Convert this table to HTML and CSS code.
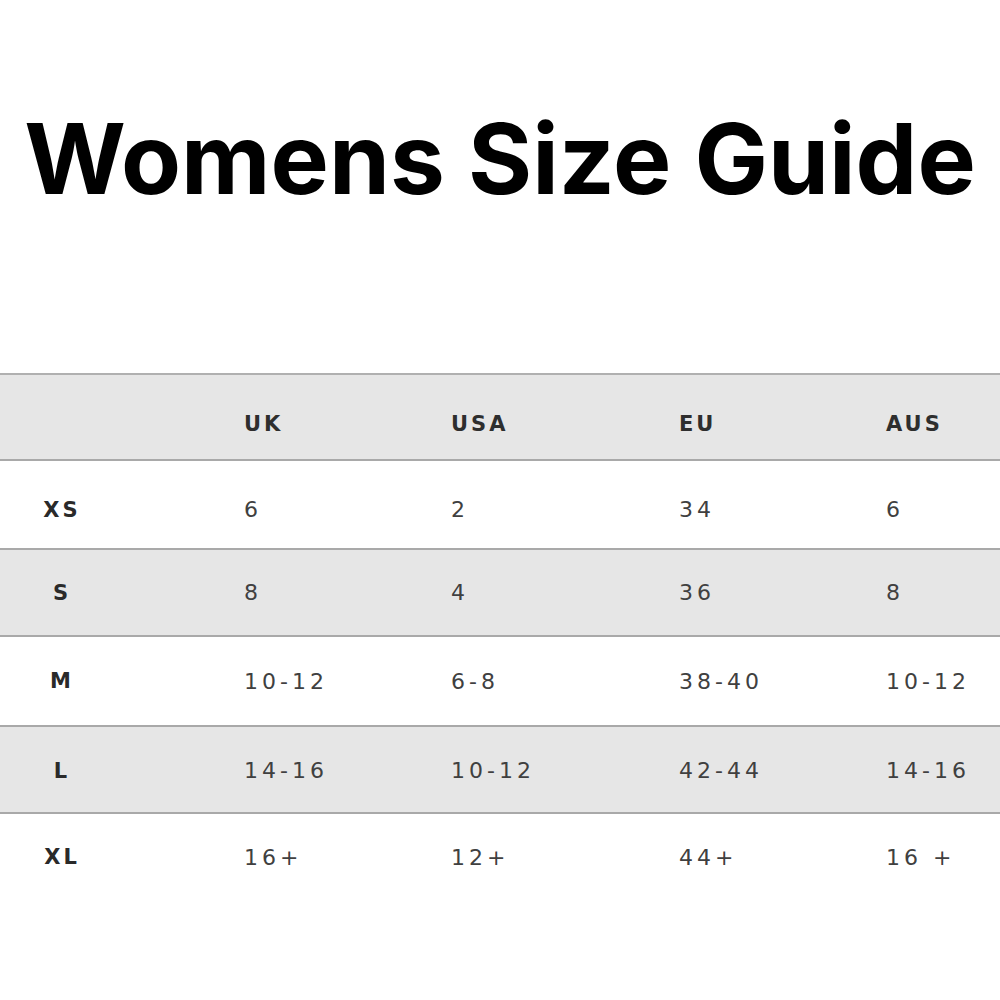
FILE: index.html
```html
<!DOCTYPE html>
<html lang="en">
<head>
<meta charset="utf-8">
<title>Womens Size Guide</title>
<link rel="stylesheet" href="styles.css">
</head>
<body>
<main class="page">
  <h1 class="title">Womens Size Guide</h1>
  <div class="chart">
    <div class="row head shaded">
      <div class="cell label"></div>
      <div class="cell">UK</div>
      <div class="cell">USA</div>
      <div class="cell">EU</div>
      <div class="cell">AUS</div>
    </div>
    <div class="row r-xs">
      <div class="cell label">XS</div>
      <div class="cell">6</div>
      <div class="cell">2</div>
      <div class="cell">34</div>
      <div class="cell">6</div>
    </div>
    <div class="row shaded r-s">
      <div class="cell label">S</div>
      <div class="cell">8</div>
      <div class="cell">4</div>
      <div class="cell">36</div>
      <div class="cell">8</div>
    </div>
    <div class="row r-m">
      <div class="cell label">M</div>
      <div class="cell">10-12</div>
      <div class="cell">6-8</div>
      <div class="cell">38-40</div>
      <div class="cell">10-12</div>
    </div>
    <div class="row shaded r-l">
      <div class="cell label">L</div>
      <div class="cell">14-16</div>
      <div class="cell">10-12</div>
      <div class="cell">42-44</div>
      <div class="cell">14-16</div>
    </div>
    <div class="row last r-xl">
      <div class="cell label">XL</div>
      <div class="cell">16+</div>
      <div class="cell">12+</div>
      <div class="cell">44+</div>
      <div class="cell">16 +</div>
    </div>
  </div>
</main>
</body>
</html>
```
FILE: styles.css
```css
html, body {
  margin: 0;
  padding: 0;
  background: #ffffff;
}

.page {
  width: 1000px;
  height: 1000px;
  overflow: hidden;
}

.title {
  margin: 0;
  padding-top: 110px;
  font-family: Inter, "Open Sans", "Liberation Sans", sans-serif;
  font-weight: 700;
  font-size: 98px;
  line-height: 98px;
  text-align: center;
  color: #000000;
  letter-spacing: 0;
}

.chart {
  margin-top: 165px;
  font-family: "DejaVu Sans", Verdana, sans-serif;
  font-size: 22px;
  letter-spacing: 4px;
  color: #404040;
}

.row {
  display: grid;
  grid-template-columns: 244px 207px 228px 207px 1fr;
  align-items: center;
  border-top: 2px solid #a9a9a9;
  box-sizing: border-box;
}

.row.shaded {
  background: #e6e6e6;
}

.row.head {
  height: 86px;
  padding-top: 14px;
  border-top-color: #b0b0b0;
  font-weight: 700;
  font-size: 21px;
  letter-spacing: 3px;
  color: #2e2e2e;
}

.r-xs { height: 89px; padding-top: 10px; }
.r-s { height: 87px; padding-top: 0; }
.r-m { height: 90px; padding-top: 0; }
.r-l { height: 87px; padding-top: 2px; }
.r-xl { height: 88px; padding-top: 0; }

.cell {
  white-space: nowrap;
}

.cell.label {
  padding-right: 120px;
  text-align: center;
  font-weight: 700;
  font-size: 21px;
  letter-spacing: 3px;
  color: #2a2a2a;
}
```
